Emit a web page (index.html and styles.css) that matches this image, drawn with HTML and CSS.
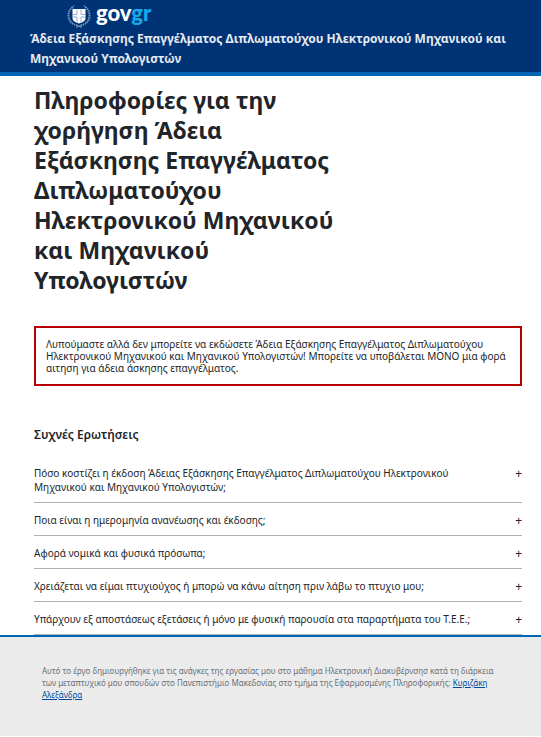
FILE: index.html
```
<!DOCTYPE html>
<html lang="el">
<head>
<meta charset="utf-8">
<meta name="viewport" content="width=device-width, initial-scale=1">
<title>Άδεια Εξάσκησης Επαγγέλματος</title>
<link rel="stylesheet" href="styles.css">
</head>
<body>
<header class="site-header">
  <a class="brand" href="#">
    <svg class="emblem" viewBox="0 0 24 24" aria-hidden="true">
      <g fill="none" stroke="#7f98bf">
        <path stroke-width="2" stroke-dasharray="1.500 0.800" d="M10.500 21.500C5 20.500 1.500 17 1.500 11.500 1.500 7.500 3.500 4 7 2"/>
        <path stroke-width="2" stroke-dasharray="1.500 0.800" d="M13.500 21.500C19 20.500 22.500 17 22.500 11.500 22.500 7.500 20.500 4 17 2"/>
        <path stroke-width="1" d="M9 23.300l6-2M15 23.300l-6-2"/>
      </g>
      <path fill="#fff" d="M5.500 5h13v9c0 3-3 4.500-6.500 5.500-3.500-1-6.500-2.500-6.500-5.500z"/>
      <path fill="none" stroke="#7f98bf" stroke-width=".8" d="M10 5.500v5H6M14 5.500v5h4M6 13h4v5.500M18 13h-4v5.500"/>
    </svg>
    <span class="wordmark">gov<span class="wordmark-gr">gr</span></span>
  </a>
  <p class="service-name">Άδεια Εξάσκησης Επαγγέλματος Διπλωματούχου Ηλεκτρονικού Μηχανικού και Μηχανικού Υπολογιστών</p>
</header>
<main class="content">
  <h1 class="title">Πληροφορίες για την χορήγηση Άδεια Εξάσκησης Επαγγέλματος Διπλωματούχου Ηλεκτρονικού Μηχανικού και Μηχανικού Υπολογιστών</h1>
  <p class="alert" role="alert">Λυπούμαστε αλλά δεν μπορείτε να εκδώσετε Άδεια Εξάσκησης Επαγγέλματος Διπλωματούχου Ηλεκτρονικού Μηχανικού και Μηχανικού Υπολογιστών! Μπορείτε να υποβάλεται ΜΟΝΟ μια φορά αιτηση για άδεια άσκησης επαγγέλματος.</p>
  <section class="faq">
    <h2 class="faq-title">Συχνές Ερωτήσεις</h2>
    <button class="question" type="button"><span class="question-text">Πόσο κοστίζει η έκδοση Άδειας Εξάσκησης Επαγγέλματος Διπλωματούχου Ηλεκτρονικού Μηχανικού και Μηχανικού Υπολογιστών;</span><span class="plus">+</span></button>
    <button class="question" type="button"><span class="question-text">Ποια είναι η ημερομηνία ανανέωσης και έκδοσης;</span><span class="plus">+</span></button>
    <button class="question" type="button"><span class="question-text">Αφορά νομικά και φυσικά πρόσωπα;</span><span class="plus">+</span></button>
    <button class="question" type="button"><span class="question-text">Χρειάζεται να είμαι πτυχιούχος ή μπορώ να κάνω αίτηση πριν λάβω το πτυχιο μου;</span><span class="plus">+</span></button>
    <button class="question" type="button"><span class="question-text">Υπάρχουν εξ αποστάσεως εξετάσεις ή μόνο με φυσική παρουσία στα παραρτήματα του Τ.Ε.Ε.;</span><span class="plus">+</span></button>
  </section>
</main>
<footer class="site-footer">
  <p class="footer-text">Αυτό το έργο δημιουργήθηκε για τις ανάγκες της εργασίας μου στο μάθημα Ηλεκτρονική Διακυβέρνσησ κατά τη διάρκεια των μεταπτυχικό μου σπουδών στο Πανεπιστήμιο Μακεδονίας στο τμήμα της Εφαρμοσμένης Πληροφορικής: <a class="footer-link" href="#">Κυριζάκη Αλεξάνδρα</a></p>
</footer>
</body>
</html>
```
FILE: styles.css
```
* {
  box-sizing: border-box;
}

body {
  margin: 0;
  background: #fff;
  color: #212529;
  font-family: "Noto Sans", "Open Sans", sans-serif;
  font-size: 10px;
}

h1, h2, p {
  margin: 0;
}

.site-header {
  padding: 3px 30px;
  background: #003375;
  border-bottom: 4px solid #0065b3;
}

.brand {
  display: flex;
  align-items: center;
  gap: 5px;
  height: 26px;
  margin-left: 37px;
  color: #fff;
  text-decoration: none;
}

.emblem {
  width: 24px;
  height: 24px;
}

.wordmark {
  font-family: Lato, sans-serif;
  font-size: 22px;
  line-height: 24px;
  font-weight: 900;
  padding-bottom: 6px;
}

.wordmark-gr {
  color: #16a9ee;
}

.service-name {
  color: #e6eaf1;
  font-size: 12px;
  line-height: 20px;
  font-weight: 700;
}

.content {
  padding: 9px 19px 0 34px;
}

.title {
  width: 64%;
  font-size: 23px;
  line-height: 30px;
  font-weight: 700;
}

.alert {
  margin-top: 31px;
  padding: 10px;
  border: 2px solid #b60000;
  line-height: 12px;
}

.faq {
  margin-top: 40px;
}

.faq-title {
  margin-bottom: 12px;
  font-size: 12px;
  line-height: 18px;
  font-weight: 600;
}

.question {
  display: flex;
  align-items: flex-start;
  justify-content: space-between;
  width: 100%;
  padding: 10px 0 8px;
  border: 0;
  border-bottom: 1px solid #b1b4b6;
  background: none;
  color: inherit;
  font: inherit;
  line-height: 14px;
  text-align: left;
}

.question-text {
  max-width: 92%;
}

.plus {
  font-size: 12px;
  line-height: 16px;
  margin-bottom: -2px;
}

.site-footer {
  padding: 28px 42px 35px;
  border-top: 2px solid #0065b3;
  background: #ebebeb;
  color: #6c7077;
}

.footer-text {
  font-size: 8px;
  line-height: 12px;
}

.footer-link {
  color: #004b9f;
}
```
